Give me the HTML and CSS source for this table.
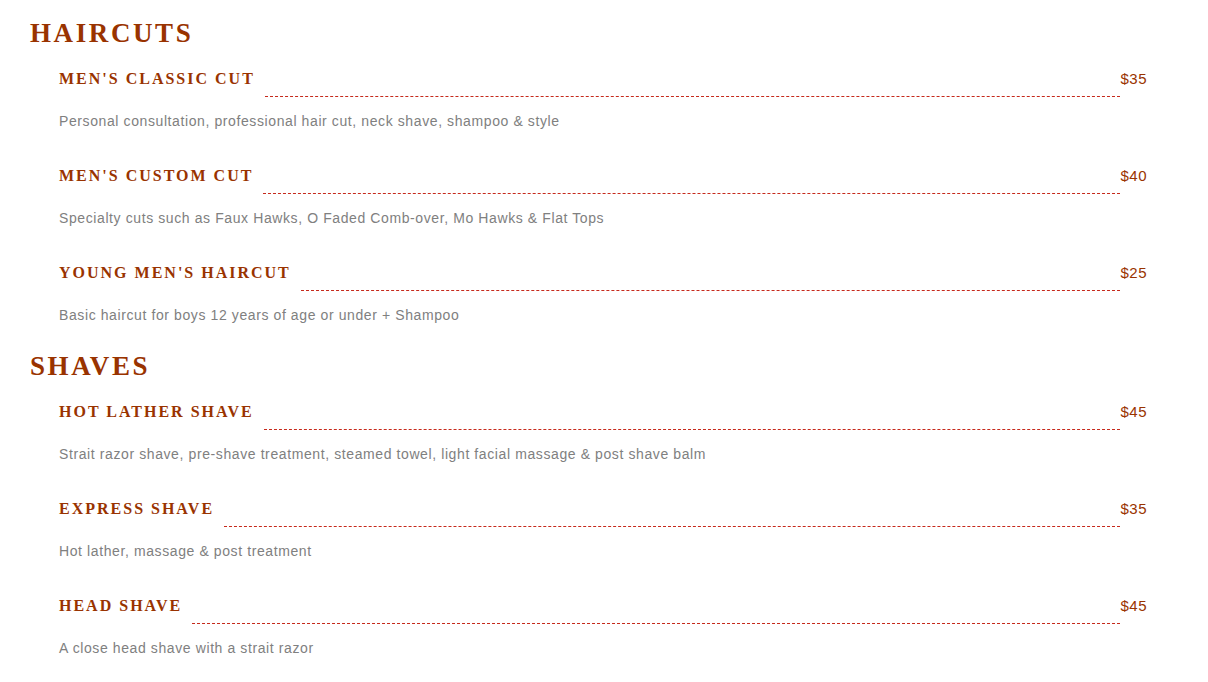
FILE: index.html
```html
<!DOCTYPE html>
<html lang="en">

<head>
    <meta charset="UTF-8">
    <title>Services</title>
    <link rel="stylesheet" href="styles.css">
</head>

<body>
    <div class="menu">
        <section class="menu-section">
            <h2 class="section-title">Haircuts</h2>
            <div class="item">
                <div class="item-head">
                    <h3 class="item-name">Men's Classic Cut</h3>
                    <span class="dots"></span>
                    <span class="price">$35</span>
                </div>
                <p class="item-desc">Personal consultation, professional hair cut, neck shave, shampoo &amp; style</p>
            </div>
            <div class="item">
                <div class="item-head">
                    <h3 class="item-name">Men's Custom Cut</h3>
                    <span class="dots"></span>
                    <span class="price">$40</span>
                </div>
                <p class="item-desc">Specialty cuts such as Faux Hawks, O Faded Comb-over, Mo Hawks &amp; Flat Tops</p>
            </div>
            <div class="item">
                <div class="item-head">
                    <h3 class="item-name">Young Men's Haircut</h3>
                    <span class="dots"></span>
                    <span class="price">$25</span>
                </div>
                <p class="item-desc">Basic haircut for boys 12 years of age or under + Shampoo</p>
            </div>
        </section>

        <section class="menu-section">
            <h2 class="section-title">Shaves</h2>
            <div class="item">
                <div class="item-head">
                    <h3 class="item-name">Hot Lather Shave</h3>
                    <span class="dots"></span>
                    <span class="price">$45</span>
                </div>
                <p class="item-desc">Strait razor shave, pre-shave treatment, steamed towel, light facial massage &amp; post shave balm</p>
            </div>
            <div class="item">
                <div class="item-head">
                    <h3 class="item-name">Express Shave</h3>
                    <span class="dots"></span>
                    <span class="price">$35</span>
                </div>
                <p class="item-desc">Hot lather, massage &amp; post treatment</p>
            </div>
            <div class="item">
                <div class="item-head">
                    <h3 class="item-name">Head Shave</h3>
                    <span class="dots"></span>
                    <span class="price">$45</span>
                </div>
                <p class="item-desc">A close head shave with a strait razor</p>
            </div>
        </section>
    </div>
</body>

</html>
```

FILE: styles.css
```css
body {
    margin: 0;
    background: #fff;
    font-family: "Liberation Sans", Arial, sans-serif;
}

.menu {
    padding: 17px 30px 20px 30px;
}

.menu-section + .menu-section {
    margin-top: 25px;
}

.section-title {
    margin: 0 0 20px 0;
    font-family: "Liberation Serif", "Times New Roman", serif;
    font-size: 27px;
    line-height: 32px;
    font-weight: bold;
    letter-spacing: 2.6px;
    text-transform: uppercase;
    color: #993300;
}

.item {
    margin: 0 31px 35px 29px;
}

.item:last-child {
    margin-bottom: 0;
}

.item-head {
    display: flex;
    align-items: flex-start;
}

.item-name {
    margin: 0;
    font-family: "Liberation Serif", "Times New Roman", serif;
    font-size: 16px;
    line-height: 20px;
    font-weight: bold;
    letter-spacing: 2px;
    text-transform: uppercase;
    color: #993300;
}

.dots {
    flex: 1;
    height: 27px;
    margin-left: 10px;
    border-bottom: 1px dashed #c62a1c;
}

.price {
    font-size: 15px;
    line-height: 20px;
    letter-spacing: 0.5px;
    color: #993300;
}

.item-desc {
    margin: 14px 0 0 0;
    font-size: 14px;
    line-height: 20px;
    letter-spacing: 0.6px;
    color: #808080;
}
```
